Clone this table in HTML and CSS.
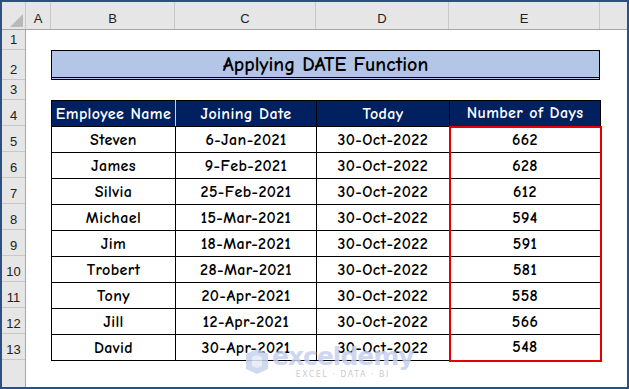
FILE: index.html
```html
<!DOCTYPE html>
<html>
<head>
    <title>Applying DATE Function</title>
    <link rel="stylesheet" href="styles.css">
</head>
<body>
    <div class="sheet">
        <div class="col-heads">
            <div class="corner"><span class="tri"></span></div>
            <div class="ch w-a">A</div>
            <div class="ch w-b">B</div>
            <div class="ch w-c">C</div>
            <div class="ch w-d">D</div>
            <div class="ch w-e">E</div>
            <div class="ch w-f"></div>
        </div>
        <div class="body">
            <div class="row-heads">
                <div class="rh h-20">1</div>
                <div class="rh h-30">2</div>
                <div class="rh h-20">3</div>
                <div class="rh">4</div>
                <div class="rh">5</div>
                <div class="rh">6</div>
                <div class="rh">7</div>
                <div class="rh">8</div>
                <div class="rh">9</div>
                <div class="rh">10</div>
                <div class="rh">11</div>
                <div class="rh">12</div>
                <div class="rh">13</div>
                <div class="rh last"></div>
            </div>
            <div class="cells">
                <div class="gap-row"></div>
                <div class="title">Applying DATE Function</div>
                <div class="gap-row"></div>
                <table class="data">
                    <colgroup>
                        <col class="w-b"><col class="w-c"><col class="w-d"><col class="w-e">
                    </colgroup>
                    <thead>
                        <tr>
                            <th class="light">Employee Name</th>
                            <th>Joining Date</th>
                            <th>Today</th>
                            <th>Number of Days</th>
                        </tr>
                    </thead>
                    <tbody>
                        <tr><td>Steven</td><td>6-Jan-2021</td><td>30-Oct-2022</td><td class="days first">662</td></tr>
                        <tr><td>James</td><td>9-Feb-2021</td><td>30-Oct-2022</td><td class="days">628</td></tr>
                        <tr><td>Silvia</td><td>25-Feb-2021</td><td>30-Oct-2022</td><td class="days">612</td></tr>
                        <tr><td>Michael</td><td>15-Mar-2021</td><td>30-Oct-2022</td><td class="days">594</td></tr>
                        <tr><td>Jim</td><td>18-Mar-2021</td><td>30-Oct-2022</td><td class="days">591</td></tr>
                        <tr><td>Trobert</td><td>28-Mar-2021</td><td>30-Oct-2022</td><td class="days">581</td></tr>
                        <tr><td>Tony</td><td>20-Apr-2021</td><td>30-Oct-2022</td><td class="days">558</td></tr>
                        <tr><td>Jill</td><td>12-Apr-2021</td><td>30-Oct-2022</td><td class="days">566</td></tr>
                        <tr><td>David</td><td>30-Apr-2021</td><td>30-Oct-2022</td><td class="days last">548</td></tr>
                    </tbody>
                </table>
                <div class="watermark">
                    <svg class="wm-logo" width="26" height="27" viewBox="0 0 26 27">
                        <path d="M2 6 L13 1 L24 6 L24 21 L13 26 L2 21 Z" fill="#c9d3ee"/>
                        <path d="M8 9 L13 7 L18 9 L18 18 L13 20 L8 18 Z" fill="#e6ebf7"/>
                    </svg>
                    <div class="wm-text">
                        <div class="wm-name">exceldemy</div>
                        <div class="wm-sub">EXCEL · DATA · BI</div>
                    </div>
                </div>
            </div>
        </div>
    </div>
</body>
</html>
```

FILE: styles.css
```css
html, body { margin: 0; padding: 0; background: #ffffff; }
.sheet { width: 629px; height: 389px; box-sizing: border-box; border: 2px solid #2c5080; background: #ffffff; overflow: hidden; display: flex; flex-direction: column; font-family: "Comic Sans MS", "Comic Neue", "DejaVu Sans", sans-serif; }

.col-heads { display: flex; height: 28px; background: #e6e6e6; border-bottom: 1px solid #a6a6a6; box-sizing: border-box; font-family: "Liberation Sans", Arial, sans-serif; font-size: 13px; color: #222; }
.corner { width: 24px; position: relative; border-right: 1px solid #c8c8c8; box-sizing: border-box; }
.tri { position: absolute; right: 2px; bottom: 2px; width: 0; height: 0; border-left: 13px solid transparent; border-bottom: 13px solid #b9b9b9; }
.ch { display: flex; align-items: center; justify-content: center; border-right: 1px solid #c8c8c8; box-sizing: border-box; padding-top: 6px; }
.w-a { width: 25px; }
.w-b { width: 124px; }
.w-c { width: 141px; }
.w-d { width: 133px; }
.w-e { width: 151px; }
.w-f { flex: 1; border-right: none; }

.body { display: flex; flex: 1; }
.row-heads { width: 24px; background: #e6e6e6; border-right: 1px solid #a6a6a6; box-sizing: border-box; font-family: "Liberation Sans", Arial, sans-serif; font-size: 13px; color: #222; }
.rh { height: 26px; box-sizing: border-box; border-bottom: 1px solid #c8c8c8; display: flex; align-items: flex-end; justify-content: center; padding-bottom: 2px; }
.rh.h-20 { height: 20px; }
.rh.h-30 { height: 30px; }
.rh.last { border-bottom: none; }

.cells { flex: 1; padding-left: 25px; position: relative; }
.gap-row { height: 20px; }
.title { width: 549px; height: 30px; box-sizing: border-box; background: #b4c6e7; border: 1px solid #000; border-bottom: 3px double #000; display: flex; align-items: center; justify-content: center; font-size: 20px; font-weight: 600; color: #000; padding-top: 1px; }

.data { border-collapse: collapse; table-layout: fixed; width: 549px; font-size: 16px; font-weight: 600; letter-spacing: 0.4px; }
.data th, .data td { height: 26px; padding: 0; text-align: center; border: 1px solid #000; box-sizing: border-box; }
.data th { background: #002060; color: #ffffff; font-weight: 600; }
.data th.light { border-right-color: #c9cfdc; }
.data td { color: #000; }
.data td.days { border-left: 2px solid #e30000; border-right: 2px solid #e30000; }
.data td.first { border-top: 2px solid #e30000; }
.data td.last { border-bottom: 2px solid #e30000; }

.watermark { position: absolute; left: 218px; top: 314px; display: flex; align-items: center; gap: 2px; opacity: 0.85; }
.wm-text { display: flex; flex-direction: column; align-items: center; }
.wm-name { font-family: "DejaVu Sans", sans-serif; font-weight: bold; font-size: 25px; color: #c5d1ef; line-height: 26px; letter-spacing: -1px; }
.wm-sub { font-family: "DejaVu Sans", sans-serif; font-size: 8px; color: #c4c4c4; letter-spacing: 1.5px; line-height: 9px; }
```
